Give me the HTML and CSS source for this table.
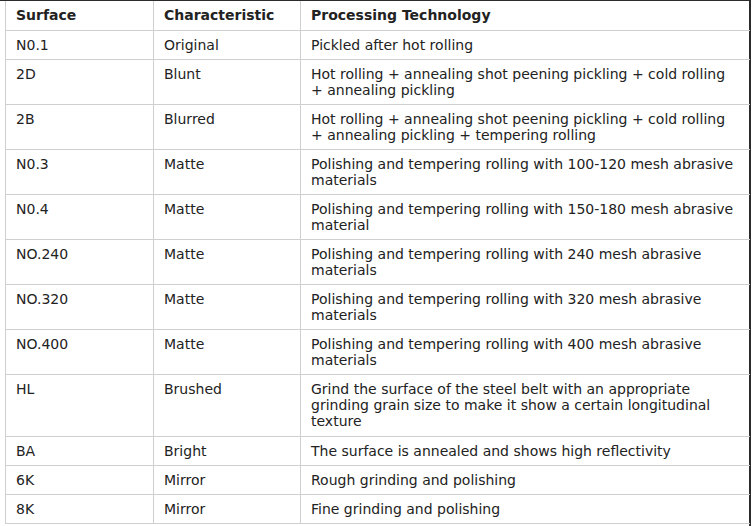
FILE: index.html
```html
<!DOCTYPE html>
<html lang="en">
<head>
<meta charset="utf-8">
<title>Surface finishes</title>
<link rel="stylesheet" href="styles.css">
</head>
<body>
<div class="frame">
<table class="spec">
<colgroup>
<col class="c1"><col class="c2"><col class="c3">
</colgroup>
<thead>
<tr><th>Surface</th><th>Characteristic</th><th>Processing Technology</th></tr>
</thead>
<tbody>
<tr><td>N0.1</td><td>Original</td><td>Pickled after hot rolling</td></tr>
<tr><td>2D</td><td>Blunt</td><td>Hot rolling + annealing shot peening pickling + cold rolling<br>+ annealing pickling</td></tr>
<tr><td>2B</td><td>Blurred</td><td>Hot rolling + annealing shot peening pickling + cold rolling<br>+ annealing pickling + tempering rolling</td></tr>
<tr><td>N0.3</td><td>Matte</td><td>Polishing and tempering rolling with 100-120 mesh abrasive<br>materials</td></tr>
<tr><td>N0.4</td><td>Matte</td><td>Polishing and tempering rolling with 150-180 mesh abrasive<br>material</td></tr>
<tr><td>NO.240</td><td>Matte</td><td>Polishing and tempering rolling with 240 mesh abrasive<br>materials</td></tr>
<tr><td>NO.320</td><td>Matte</td><td>Polishing and tempering rolling with 320 mesh abrasive<br>materials</td></tr>
<tr><td>NO.400</td><td>Matte</td><td>Polishing and tempering rolling with 400 mesh abrasive<br>materials</td></tr>
<tr class="tall"><td>HL</td><td>Brushed</td><td>Grind the surface of the steel belt with an appropriate<br>grinding grain size to make it show a certain longitudinal<br>texture</td></tr>
<tr><td>BA</td><td>Bright</td><td>The surface is annealed and shows high reflectivity</td></tr>
<tr><td>6K</td><td>Mirror</td><td>Rough grinding and polishing</td></tr>
<tr><td>8K</td><td>Mirror</td><td>Fine grinding and polishing</td></tr>
</tbody>
</table>
</div>
</body>
</html>
```

FILE: styles.css
```css
html, body {
  margin: 0;
  padding: 0;
  background: #fff;
}
body {
  font-family: "DejaVu Sans", Verdana, sans-serif;
  font-size: 14px;
  color: #222;
}
.frame {
  width: 751px;
  border-top: 1px solid #2b2b2b;
  border-right: 2px solid #2b2b2b;
  padding-left: 5px;
  box-sizing: border-box;
  height: 526px;
}
.spec {
  width: 744px;
  border-collapse: collapse;
  table-layout: fixed;
}
.c1 { width: 148px; }
.c2 { width: 147px; }
.c3 { width: 449px; }
.spec th, .spec td {
  border: 1px solid #cfcfcf;
  padding: 6px 10px;
  line-height: 16px;
  text-align: left;
  vertical-align: top;
  white-space: nowrap;
}
.spec th {
  font-weight: bold;
  padding-bottom: 7px;
}
.spec .tall td {
  padding-bottom: 7px;
}
.spec thead th {
  border-top: 0;
}
.spec tr > :last-child {
  border-right: 0;
}
```
